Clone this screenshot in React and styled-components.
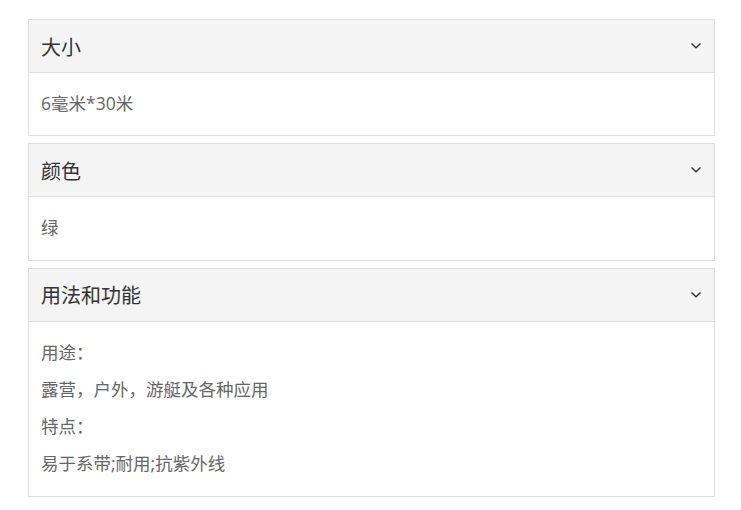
import React from "react"
import styled, { createGlobalStyle } from "styled-components"

const Global = createGlobalStyle`
  html, body {
    margin: 0;
    padding: 0;
    background: #fff;
  }
  body {
    font-family: "Open Sans", "Noto Sans CJK SC", sans-serif;
  }
`

const Page = styled.div`
  width: 741px;
  padding: 19px 26px 0 28px;
  box-sizing: border-box;
  display: flex;
  flex-direction: column;
  gap: 7px;
`

const Panel = styled.section`
  border: 1px solid #dedede;
  background: #fff;
`

const Header = styled.div`
  height: 52px;
  background: #f4f4f4;
  border-bottom: 1px solid #dedede;
  display: flex;
  align-items: center;
  justify-content: space-between;
  padding: 0 12px;
  font-size: 20px;
  color: #333;
`

const Body = styled.div`
  padding: 12px 12px 13px;
  font-size: 17.5px;
  color: #666;
`

const Line = styled.p`
  margin: 0;
  line-height: 37.25px;
`

const Chevron = () => (
  <svg width="12" height="8" viewBox="0 0 12 8">
    <path d="M1.5 1.5 L6 5.8 L10.5 1.5" fill="none" stroke="#333" strokeWidth="1.5" />
  </svg>
)

const sections = [
  { title: "大小", lines: ["6毫米*30米"] },
  { title: "颜色", lines: ["绿"] },
  {
    title: "用法和功能",
    lines: ["用途：", "露营，户外，游艇及各种应用", "特点：", "易于系带;耐用;抗紫外线"],
  },
]

const App = () => (
  <>
    <Global />
    <Page>
      {sections.map(s => (
        <Panel key={s.title}>
          <Header>
            <span>{s.title}</span>
            <Chevron />
          </Header>
          <Body>
            {s.lines.map((l, i) => (
              <Line key={i}>{l}</Line>
            ))}
          </Body>
        </Panel>
      ))}
    </Page>
  </>
)

export default App
